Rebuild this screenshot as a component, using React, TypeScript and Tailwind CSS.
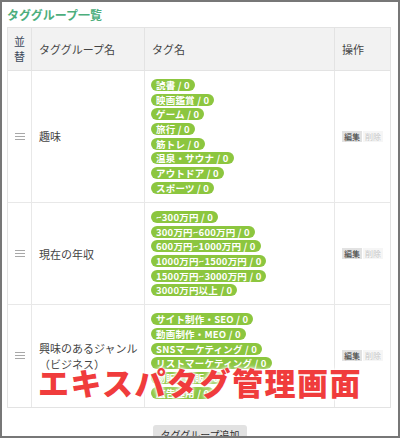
const groups = [
    {
        name: ["趣味"],
        tags: ["読書", "映画鑑賞", "ゲーム", "旅行", "筋トレ", "温泉・サウナ", "アウトドア", "スポーツ"],
    },
    {
        name: ["現在の年収"],
        tags: ["~300万円", "300万円~600万円", "600万円~1000万円", "1000万円~1500万円", "1500万円~3000万円", "3000万円以上"],
    },
    {
        name: ["興味のあるジャンル", "（ビジネス）"],
        tags: ["サイト制作・SEO", "動画制作・MEO", "SNSマーケティング", "リストマーケティング", "物販・転販", "広告運用"],
    },
];

const Handle = () => (
    <svg width="10" height="7" viewBox="0 0 10 7" className="text-[#a8a8a8]">
        <path d="M0 0.5h10M0 3.5h10M0 6.5h10" stroke="currentColor" strokeWidth="1" />
    </svg>
);

export default function App() {
    return (
        <div
            className="relative w-[400px] h-[438px] overflow-hidden border-2 border-[#777] bg-white text-[#444]"
            style={{ fontFamily: '"Noto Sans CJK JP", "Noto Sans", sans-serif' }}
        >
            {/* Title */}
            <div className="h-[25px] pl-[5px] flex items-center text-[12px] font-bold text-[#4cae7c]">
                タググループ一覧
            </div>

            {/* Table */}
            <div className="ml-[5px] w-[384px] border border-[#e3e3e3]">
                <div className="grid grid-cols-[23px_113px_190px_1fr] h-[43px] bg-[#f2f2f2] border-b border-[#e3e3e3] text-[11px]">
                    <div className="flex flex-col items-center justify-center leading-[15px] text-[#3d4a5c]">
                        <span>並</span>
                        <span>替</span>
                    </div>
                    <div className="border-l border-[#e3e3e3] flex items-center pl-[7px]">タググループ名</div>
                    <div className="border-l border-[#e3e3e3] flex items-center pl-[7px]">タグ名</div>
                    <div className="border-l border-[#e3e3e3] flex items-center pl-[7px]">操作</div>
                </div>

                {groups.map((g, i) => (
                    <div
                        key={i}
                        className="grid grid-cols-[23px_113px_190px_1fr] border-b border-[#e8e8e8] last:border-b-0 text-[11px]"
                    >
                        <div className="flex items-center justify-center">
                            <Handle />
                        </div>
                        <div className="border-l border-[#e8e8e8] flex flex-col justify-center pl-[7px] leading-[16px]">
                            {g.name.map((n) => (
                                <span key={n}>{n}</span>
                            ))}
                        </div>
                        <div className="border-l border-[#e8e8e8] flex flex-col gap-[2.7px] pl-[6px] py-[8px]">
                            {g.tags.map((t) => (
                                <span
                                    key={t}
                                    className="w-fit h-[12px] rounded-full bg-[#8cc63f] px-[5px] text-[9.5px] font-bold leading-[12px] tracking-[0.2px] text-white whitespace-nowrap"
                                >
                                    {t} / 0
                                </span>
                            ))}
                        </div>
                        <div className="border-l border-[#e8e8e8] flex items-center gap-[1px] pl-[7px]">
                            <span className="h-[11px] px-[2px] bg-[#e2e2e2] text-[8px] leading-[11px] text-[#333]">編集</span>
                            <span className="h-[11px] px-[2px] bg-[#f6f6f6] text-[8px] leading-[11px] text-[#c8c8c8]">削除</span>
                        </div>
                    </div>
                ))}
            </div>

            {/* Add button */}
            <div className="flex justify-center mt-[17px]">
                <button className="h-[20px] px-[7px] rounded-[3px] bg-[#e2e2e2] text-[10px] leading-[20px] text-[#333]">
                    タググループ追加
                </button>
            </div>

            {/* Overlay caption */}
            <div className="absolute left-[36px] top-[360px] text-[31px] font-black tracking-[1.5px] leading-[40px] text-[#f03c3c] whitespace-nowrap [text-shadow:0_0_3px_#fff,0_0_3px_#fff,0_0_6px_#fff]">
                エキスパタグ管理画面
            </div>
        </div>
    );
}
